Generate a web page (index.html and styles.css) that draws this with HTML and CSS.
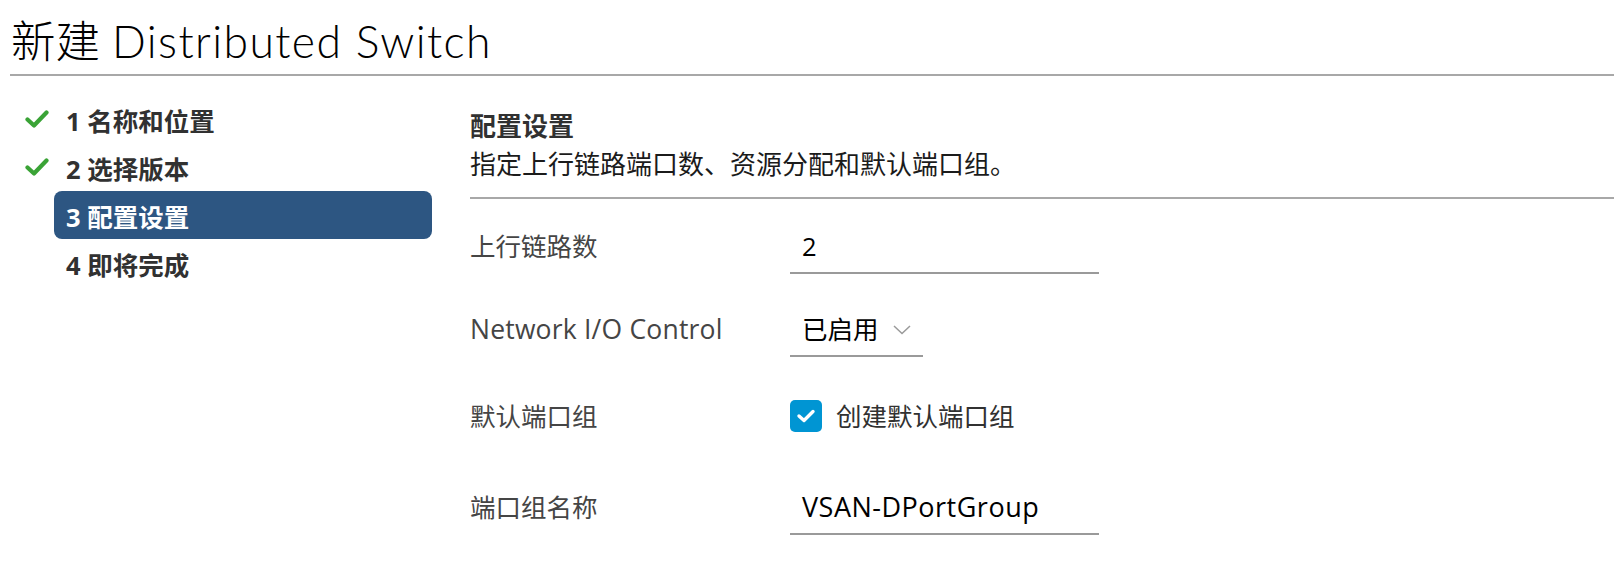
FILE: index.html
```html
<!DOCTYPE html>
<html lang="zh-CN">
<head>
<meta charset="utf-8">
<title>新建 Distributed Switch</title>
<link rel="stylesheet" href="styles.css">
</head>
<body>
<div class="wizard">
  <header class="title-bar">
    <h1 class="title">新建 <span class="title-latin">Distributed Switch</span></h1>
  </header>
  <div class="wizard-body">
    <nav class="steps">
      <div class="step">
        <span class="step-icon">
          <svg width="24" height="20" viewBox="0 0 24 20"><path d="M2.5 10.5 L9 16.5 L21.5 3.5" fill="none" stroke="#3aa336" stroke-width="4.2" stroke-linecap="round" stroke-linejoin="round"/></svg>
        </span>
        <span class="step-link">1 名称和位置</span>
      </div>
      <div class="step">
        <span class="step-icon">
          <svg width="24" height="20" viewBox="0 0 24 20"><path d="M2.5 10.5 L9 16.5 L21.5 3.5" fill="none" stroke="#3aa336" stroke-width="4.2" stroke-linecap="round" stroke-linejoin="round"/></svg>
        </span>
        <span class="step-link">2 选择版本</span>
      </div>
      <div class="step">
        <span class="step-icon"></span>
        <span class="step-link active">3 配置设置</span>
      </div>
      <div class="step">
        <span class="step-icon"></span>
        <span class="step-link">4 即将完成</span>
      </div>
    </nav>
    <main class="content">
      <div class="section-head">
        <h2 class="section-title">配置设置</h2>
        <p class="section-desc">指定上行链路端口数、资源分配和默认端口组。</p>
      </div>
      <div class="form">
        <div class="label">上行链路数</div>
        <div class="field input"><span class="value">2</span></div>

        <div class="label latin-label">Network I/O Control</div>
        <div class="field select"><span class="value">已启用</span>
          <svg class="chevron" width="18" height="10" viewBox="0 0 18 10"><path d="M1 1 L9 8.5 L17 1" fill="none" stroke="#9a9a9a" stroke-width="1.5"/></svg>
        </div>

        <div class="label">默认端口组</div>
        <div class="field checkbox-field">
          <span class="checkbox">
            <svg width="20" height="16" viewBox="0 0 20 16"><path d="M3 8 L8 12.5 L17 3.5" fill="none" stroke="#fff" stroke-width="3.4" stroke-linecap="round" stroke-linejoin="round"/></svg>
          </span>
          <span class="checkbox-label">创建默认端口组</span>
        </div>

        <div class="label">端口组名称</div>
        <div class="field input"><span class="value latin-value">VSAN-DPortGroup</span></div>
      </div>
    </main>
  </div>
</div>
</body>
</html>
```

FILE: styles.css
```css
html, body {
  margin: 0;
  padding: 0;
  background: #fff;
}

body {
  font-family: "Open Sans", "Noto Sans CJK SC", sans-serif;
  color: #1b1b1b;
}

.wizard {
  width: 1614px;
}

.title-bar {
  margin-left: 10px;
  padding-top: 13px;
  padding-bottom: 5px;
  border-bottom: 2px solid #a8a8a8;
}

.title {
  margin: 0;
  padding-left: 1px;
  font-family: "Lato", "Noto Sans CJK SC", sans-serif;
  font-size: 44.5px;
  line-height: 56px;
  font-weight: 300;
  color: #000;
}

.title-latin {
  font-weight: 300;
  letter-spacing: 1.4px;
}

.wizard-body {
  display: flex;
}

.steps {
  display: flex;
  flex-direction: column;
  padding-top: 19px;
  padding-left: 25px;
  width: 407px;
  flex: none;
}

.step {
  display: flex;
  align-items: center;
  height: 48px;
}

.step-icon {
  width: 29px;
  flex: none;
  display: flex;
  align-items: center;
}

.step-link {
  flex: 1;
  height: 48px;
  display: flex;
  align-items: center;
  padding-left: 12px;
  border-radius: 8px;
  font-size: 25.5px;
  font-weight: 700;
  color: #313131;
}

.step-link.active {
  background: #2d5682;
  color: #fff;
}

.content {
  flex: 1;
  margin-left: 38px;
  padding-top: 31px;
}

.section-head {
  border-bottom: 2px solid #a8a8a8;
  padding-bottom: 14px;
}

.section-title {
  margin: 0;
  font-size: 26px;
  line-height: 38px;
  font-weight: 700;
  color: #313131;
}

.section-desc {
  margin: 0;
  font-size: 26px;
  line-height: 38px;
  color: #1b1b1b;
}

.form {
  display: grid;
  grid-template-columns: 320px 309px;
  grid-template-rows: 83px 87px 91px 48px;
  margin-top: 27px;
  align-items: start;
}

.label {
  font-size: 25.5px;
  line-height: 40px;
  color: #454545;
}

.latin-label {
  font-size: 26.5px;
  letter-spacing: 0.2px;
}

.field {
  box-sizing: border-box;
  height: 48px;
  padding-left: 12px;
  padding-bottom: 6px;
  display: flex;
  align-items: flex-start;
  font-size: 25.5px;
  line-height: 40px;
  color: #000;
}

.latin-value {
  font-size: 27px;
  letter-spacing: 0.5px;
}

.input {
  border-bottom: 2px solid #9a9a9a;
}

.select {
  width: 133px;
  border-bottom: 2px solid #9a9a9a;
  gap: 14px;
}

.chevron {
  margin-top: 16px;
}

.checkbox-field {
  padding-left: 0;
  padding-top: 3px;
  align-items: center;
  height: 43px;
  gap: 14px;
}

.checkbox {
  width: 32px;
  height: 32px;
  border-radius: 5px;
  background: #0095d3;
  display: flex;
  align-items: center;
  justify-content: center;
  flex: none;
}

.checkbox-label {
  color: #313131;
}
```
